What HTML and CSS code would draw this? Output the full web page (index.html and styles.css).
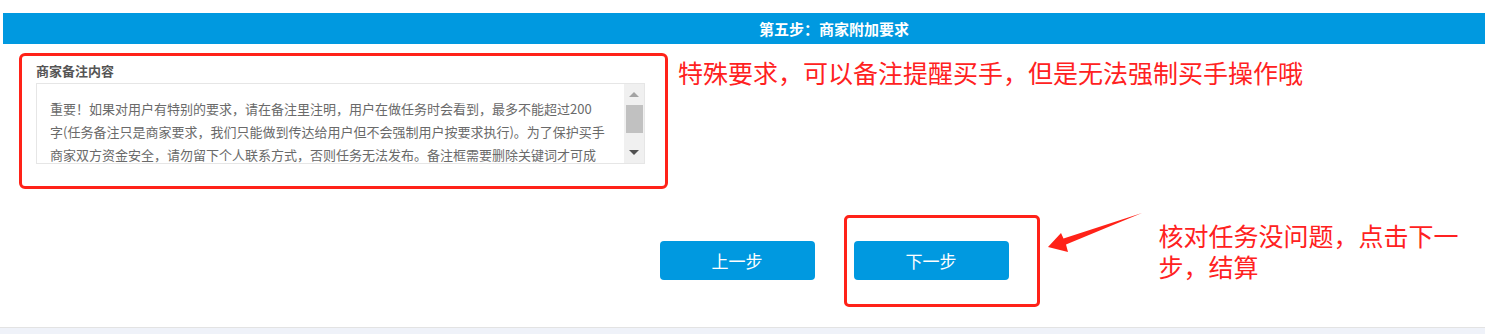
FILE: index.html
```html
<!DOCTYPE html>
<html lang="zh-CN">
<head>
  <meta charset="UTF-8" />
  <meta name="viewport" content="width=device-width,initial-scale=1" />
  <title>商家附加要求</title>
  <link rel="stylesheet" href="styles.css">
</head>
<body>

  <div class="main">
    <div class="step-panel">
      <div class="step-title">第五步：商家附加要求</div>

      <!-- remark field -->
      <div class="remark-row">
        <div class="remark-field">
          <label class="remark-label">商家备注内容</label>
          <div class="remark-box">
            <div class="remark-text">
              <p>重要！如果对用户有特别的要求，请在备注里注明，用户在做任务时会看到，最多不能超过200</p>
              <p>字(任务备注只是商家要求，我们只能做到传达给用户但不会强制用户按要求执行)。为了保护买手</p>
              <p>商家双方资金安全，请勿留下个人联系方式，否则任务无法发布。备注框需要删除关键词才可成</p>
            </div>
            <div class="scrollbar">
              <span class="sb-btn"><i class="sb-up"></i></span>
              <span class="sb-thumb"></span>
              <span class="sb-btn sb-end"><i class="sb-down"></i></span>
            </div>
          </div>
        </div>
        <p class="note note-remark">特殊要求，可以备注提醒买手，但是无法强制买手操作哦</p>
      </div>

      <!-- step buttons -->
      <div class="btn-row">
        <button class="step-btn">上一步</button>
        <div class="next-wrap">
          <button class="step-btn">下一步</button>
          <span class="mark-next"></span>
          <svg class="arrow" width="100" height="45" viewBox="0 0 100 45">
            <polygon points="3,37 16,23 18.5,28.5 97,3 21,34.5 23,42" fill="#ff2218"/>
          </svg>
          <p class="note note-next">核对任务没问题，点击下一步，结算</p>
        </div>
      </div>
    </div>
  </div>

  <div class="footer"></div>

</body>
</html>
```

FILE: styles.css
```css
* { box-sizing: border-box; margin:0; padding:0 }
body {
  font-family: "Microsoft YaHei", "Noto Sans CJK SC", sans-serif;
  background: #fff;
  color: #333;
  overflow: hidden;
}

.main {
  padding: 13px 0 0 3px;
}

.step-title {
  height: 31px;
  line-height: 31px;
  padding-left: 180px;
  background: #0099e0;
  color: #fff;
  font-size: 15px;
  font-weight: bold;
  text-align: center;
}

.remark-row {
  display: flex;
  align-items: flex-start;
  margin: 9px 0 0 16px;
}

.remark-field {
  width: 649px;
  padding: 6px 20px 22px 14px;
  border: 3px solid #ff2218;
  border-radius: 6px;
}

.remark-label {
  display: block;
  font-size: 13px;
  line-height: 17px;
  font-weight: bold;
  color: #555;
  margin-bottom: 4px;
}

.remark-box {
  display: flex;
  height: 81px;
  border: 1px solid #e6e6e6;
  overflow: hidden;
}

.remark-text {
  flex: 1;
  padding: 13px 0 0 13px;
  font-size: 13px;
  line-height: 23px;
  color: #6a6a6a;
  white-space: nowrap;
  overflow: hidden;
}

.scrollbar {
  width: 20px;
  background: #f0f0f0;
  display: flex;
  flex-direction: column;
  align-items: center;
}

.sb-btn {
  height: 21px;
  width: 100%;
  display: flex;
  align-items: center;
  justify-content: center;
}
.sb-end { margin-top: auto; }

.sb-up {
  width: 0; height: 0;
  border-left: 5px solid transparent;
  border-right: 5px solid transparent;
  border-bottom: 5px solid #a3a3a3;
}

.sb-down {
  width: 0; height: 0;
  border-left: 5px solid transparent;
  border-right: 5px solid transparent;
  border-top: 5px solid #505050;
}

.sb-thumb {
  width: 17px;
  height: 28px;
  background: #c1c1c1;
}

.note {
  color: #ff2121;
  font-size: 25px;
  line-height: 31px;
}

.note-remark {
  margin: 4px 0 0 10px;
  white-space: nowrap;
}

.btn-row {
  display: flex;
  justify-content: center;
  gap: 39px;
  padding-left: 180px;
  margin: 52px 0 47px;
}

.step-btn {
  width: 155px;
  height: 39px;
  border: none;
  border-radius: 4px;
  background: #0099e0;
  color: #fff;
  font-family: inherit;
  font-size: 17px;
  cursor: pointer;
}

.next-wrap {
  position: relative;
}

.mark-next {
  position: absolute;
  left: -10px;
  top: -26px;
  width: 196px;
  height: 92px;
  border: 3px solid #ff2218;
  border-radius: 5px;
}

.arrow {
  position: absolute;
  left: 191px;
  top: -31px;
}

.note-next {
  position: absolute;
  left: 305px;
  top: -21px;
  width: 312px;
}

.footer {
  height: 7px;
  border-top: 1px solid #e3e3e3;
  background: #eff2f9;
}
```
